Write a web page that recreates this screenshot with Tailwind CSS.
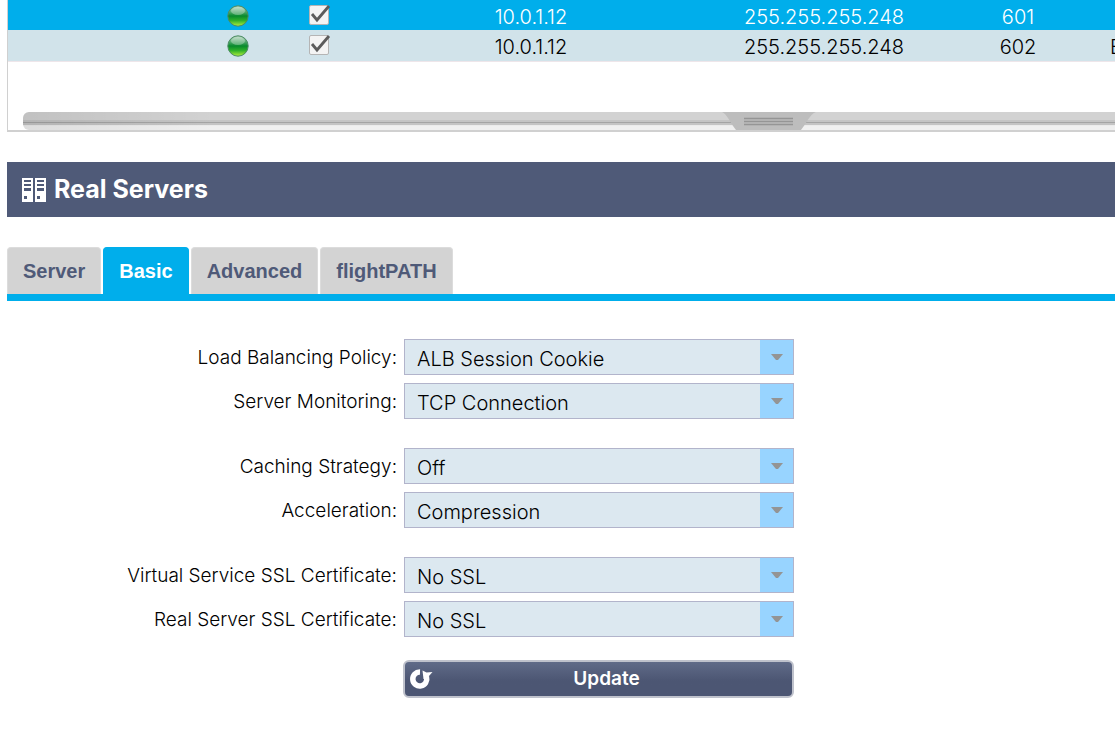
<!DOCTYPE html>
<html lang="en">
<head>
    <meta charset="utf-8">
    <meta name="viewport" content="width=device-width, initial-scale=1">
    <title>Real Servers</title>
    <script src="https://cdn.jsdelivr.net/npm/@tailwindcss/browser@4"></script>
</head>
<body class="bg-white text-black text-[19px] font-[Inter,sans-serif] pl-[7px] overflow-x-hidden">

    <svg class="absolute w-0 h-0">
        <defs>
            <linearGradient id="ball" x1="0" y1="0" x2="0" y2="1">
                <stop offset="0" stop-color="#b9d8c4"/>
                <stop offset=".3" stop-color="#4fa86a"/>
                <stop offset=".5" stop-color="#078a2c"/>
                <stop offset=".72" stop-color="#2fb02a"/>
                <stop offset="1" stop-color="#b4f03c"/>
            </linearGradient>
            <symbol id="status" viewBox="0 0 22 22">
                <circle cx="11" cy="11" r="10.2" fill="url(#ball)" stroke="#4b8a62" stroke-width="1"/>
                <ellipse cx="11" cy="6" rx="7" ry="4" fill="#fff" fill-opacity=".3"/>
            </symbol>
        </defs>
    </svg>

    <!-- virtual services grid -->
    <section class="border-l border-b-2 border-[#d0d0d0] h-[132px] flex flex-col justify-between overflow-hidden">
        <table class="table-fixed w-[1160px] border-collapse text-center text-xl/6 font-light">
            <colgroup>
                <col class="w-[190px]">
                <col class="w-20">
                <col class="w-[82px]">
                <col class="w-[342px]">
                <col class="w-[244px]">
                <col class="w-36">
                <col>
            </colgroup>
            <tbody>
                <tr class="h-[30px] bg-[#00aeeb] text-white">
                    <td></td>
                    <td class="pt-[2px]"><svg class="w-[22px] h-[22px] mx-auto"><use href="#status"/></svg></td>
                    <td>
                        <label class="relative block w-5 h-5 mx-auto">
                            <input type="checkbox" checked aria-label="Enable 601" class="appearance-none block w-5 h-5 border border-[#b5b5b5] bg-[#f4f4f4] rounded-xs">
                            <svg class="absolute inset-0 w-[22px] h-5" viewBox="0 0 22 20"><path d="M3 9l5 6L20 1" fill="none" stroke="#5c5c5c" stroke-width="2.8"/></svg>
                        </label>
                    </td>
                    <td class="pt-[3px]">10.0.1.12</td>
                    <td class="pt-[3px]">255.255.255.248</td>
                    <td class="pt-[3px]">601</td>
                    <td></td>
                </tr>
                <tr class="h-[31px] bg-[#d1e3ea] border-b border-[#eee6ea]">
                    <td></td>
                    <td class="pt-[2px]"><svg class="w-[22px] h-[22px] mx-auto"><use href="#status"/></svg></td>
                    <td>
                        <label class="relative block w-5 h-5 mx-auto">
                            <input type="checkbox" checked aria-label="Enable 602" class="appearance-none block w-5 h-5 border border-[#b5b5b5] bg-[#f4f4f4] rounded-xs">
                            <svg class="absolute inset-0 w-[22px] h-5" viewBox="0 0 22 20"><path d="M3 9l5 6L20 1" fill="none" stroke="#5c5c5c" stroke-width="2.8"/></svg>
                        </label>
                    </td>
                    <td class="pt-[3px]">10.0.1.12</td>
                    <td class="pt-[3px]">255.255.255.248</td>
                    <td class="pt-[3px]">602</td>
                    <td class="pt-[3px] text-left pl-5">E</td>
                </tr>
            </tbody>
        </table>

        <!-- resize bar with its grip -->
        <div class="relative ml-[15px] h-[18px] rounded-l-md bg-linear-to-b from-[#d2d2d2] from-50% to-[#f0f0f0] to-80%">
            <div class="absolute inset-x-0 top-2 h-[5px] border-y-2 border-[#c4c4c4] bg-[#a4a4a4]"></div>
            <div class="absolute inset-y-0 left-0 w-48 rounded-l-md bg-linear-to-r from-black/8 to-transparent"></div>
            <svg class="absolute top-0 left-[64%] w-[94px] h-[18px]" viewBox="0 0 94 18">
                <path d="M0 0h94C88 2 84 12 79 18H14C9 12 5 2 0 0z" fill="#bdbdbd"/>
                <path d="M22 6.500h49M22 9.500h49M22 12.500h49" stroke="#959595" stroke-width="1.500"/>
            </svg>
        </div>
    </section>

    <header class="mt-[30px] h-[55px] bg-[#4f5a78] text-white flex items-center gap-2 pl-[15px]">
        <svg class="w-6 h-6" viewBox="0 0 24 24">
            <path fill="#fff" d="M0 0h11v24H0zM13 0h11v24H13z"/>
            <path fill="#4f5a78" d="M2 2h7v2H2zM2 6h7v2H2zM2 10h7v3H2zM2 18h3v3H2zM15 2h7v2h-7zM15 6h7v2h-7zM15 10h7v3h-7zM15 18h3v3h-3z"/>
        </svg>
        <h1 class="text-[25px] font-bold">Real Servers</h1>
    </header>

    <nav class="mt-[30px] flex gap-[2px] border-b-[7px] border-[#00aeeb] font-['Liberation_Sans',sans-serif] font-bold text-xl text-[#4f5a78]">
        <button type="button" class="h-[47px] px-[15px] rounded-t-sm border border-b-0 border-[#dcdcdc] bg-[#d3d3d3]">Server</button>
        <button type="button" class="h-[47px] px-[15px] rounded-t-sm border border-b-0 border-[#00aeeb] bg-[#00aeeb] text-white">Basic</button>
        <button type="button" class="h-[47px] px-[15px] rounded-t-sm border border-b-0 border-[#dcdcdc] bg-[#d3d3d3]">Advanced</button>
        <button type="button" class="h-[47px] px-[15px] rounded-t-sm border border-b-0 border-[#dcdcdc] bg-[#d3d3d3]">flightPATH</button>
    </nav>

    <form class="mt-[38px] w-[787px] max-w-full flex flex-col gap-[29px] font-light">
        <div class="flex flex-col gap-2">
            <div class="flex items-center gap-[7px]">
                <label for="policy" class="flex-1 pt-[2px] text-right">Load Balancing Policy:</label>
                <div class="relative w-[390px]">
                    <select id="policy" class="appearance-none block w-full h-9 pt-[3px] pl-3 text-xl border border-[#b2b4cb] bg-[#dce8f0]"><option>ALB Session Cookie</option></select>
                    <span class="absolute inset-y-px right-px w-[33px] bg-[#98d4ff] flex items-center justify-center pointer-events-none"><svg class="w-3 h-[6px]" viewBox="0 0 12 6"><path d="M0 0h12L7 6H5z" fill="#949494"/></svg></span>
                </div>
            </div>
            <div class="flex items-center gap-[7px]">
                <label for="monitoring" class="flex-1 pt-[2px] text-right">Server Monitoring:</label>
                <div class="relative w-[390px]">
                    <select id="monitoring" class="appearance-none block w-full h-9 pt-[3px] pl-3 text-xl border border-[#b2b4cb] bg-[#dce8f0]"><option>TCP Connection</option></select>
                    <span class="absolute inset-y-px right-px w-[33px] bg-[#98d4ff] flex items-center justify-center pointer-events-none"><svg class="w-3 h-[6px]" viewBox="0 0 12 6"><path d="M0 0h12L7 6H5z" fill="#949494"/></svg></span>
                </div>
            </div>
        </div>

        <div class="flex flex-col gap-2">
            <div class="flex items-center gap-[7px]">
                <label for="caching" class="flex-1 pt-[2px] text-right">Caching Strategy:</label>
                <div class="relative w-[390px]">
                    <select id="caching" class="appearance-none block w-full h-9 pt-[3px] pl-3 text-xl border border-[#b2b4cb] bg-[#dce8f0]"><option>Off</option></select>
                    <span class="absolute inset-y-px right-px w-[33px] bg-[#98d4ff] flex items-center justify-center pointer-events-none"><svg class="w-3 h-[6px]" viewBox="0 0 12 6"><path d="M0 0h12L7 6H5z" fill="#949494"/></svg></span>
                </div>
            </div>
            <div class="flex items-center gap-[7px]">
                <label for="acceleration" class="flex-1 pt-[2px] text-right">Acceleration:</label>
                <div class="relative w-[390px]">
                    <select id="acceleration" class="appearance-none block w-full h-9 pt-[3px] pl-3 text-xl border border-[#b2b4cb] bg-[#dce8f0]"><option>Compression</option></select>
                    <span class="absolute inset-y-px right-px w-[33px] bg-[#98d4ff] flex items-center justify-center pointer-events-none"><svg class="w-3 h-[6px]" viewBox="0 0 12 6"><path d="M0 0h12L7 6H5z" fill="#949494"/></svg></span>
                </div>
            </div>
        </div>

        <div class="flex flex-col gap-2">
            <div class="flex items-center gap-[7px]">
                <label for="vs-ssl" class="flex-1 pt-[2px] text-right">Virtual Service SSL Certificate:</label>
                <div class="relative w-[390px]">
                    <select id="vs-ssl" class="appearance-none block w-full h-9 pt-[3px] pl-3 text-xl border border-[#b2b4cb] bg-[#dce8f0]"><option>No SSL</option></select>
                    <span class="absolute inset-y-px right-px w-[33px] bg-[#98d4ff] flex items-center justify-center pointer-events-none"><svg class="w-3 h-[6px]" viewBox="0 0 12 6"><path d="M0 0h12L7 6H5z" fill="#949494"/></svg></span>
                </div>
            </div>
            <div class="flex items-center gap-[7px]">
                <label for="rs-ssl" class="flex-1 pt-[2px] text-right">Real Server SSL Certificate:</label>
                <div class="relative w-[390px]">
                    <select id="rs-ssl" class="appearance-none block w-full h-9 pt-[3px] pl-3 text-xl border border-[#b2b4cb] bg-[#dce8f0]"><option>No SSL</option></select>
                    <span class="absolute inset-y-px right-px w-[33px] bg-[#98d4ff] flex items-center justify-center pointer-events-none"><svg class="w-3 h-[6px]" viewBox="0 0 12 6"><path d="M0 0h12L7 6H5z" fill="#949494"/></svg></span>
                </div>
            </div>
            <button type="button" class="relative self-end mt-[15px] w-[391px] h-[38px] pl-4 rounded-md border-2 border-[#bfc2cc] bg-linear-to-b from-[#606b88] to-[#4c5673] to-55% text-white font-semibold flex items-center justify-center">
                <svg class="absolute left-1 top-[6px] w-6 h-[22px]" viewBox="0 0 24 22">
                    <path d="M11 4A7 7 0 1 0 17.500 9" fill="none" stroke="#fff" stroke-width="5.500"/>
                    <path d="M13.500 2.500l4 2 6-.5-3.500 4-.5 3h-5z" fill="#fff"/>
                </svg>
                Update
            </button>
        </div>
    </form>

</body>
</html>
